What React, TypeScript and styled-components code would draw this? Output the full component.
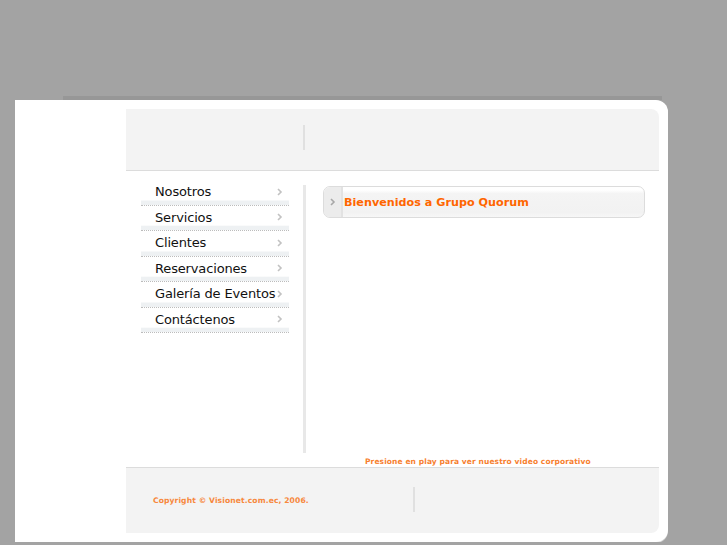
import React from "react";
import styled, { createGlobalStyle } from "styled-components";

const menu = [
  "Nosotros",
  "Servicios",
  "Clientes",
  "Reservaciones",
  "Galería de Eventos",
  "Contáctenos",
];

const GlobalStyle = createGlobalStyle`
  body {
    margin: 0;
    background: #a3a3a3;
    font-family: "DejaVu Sans", Verdana, sans-serif;
  }
`;

const Page = styled.div`
  padding: 100px 0 0 15px;
`;

const Panel = styled.div`
  position: relative;
  width: 653px;
  height: 442px;
  box-sizing: border-box;
  padding: 9px 9px 9px 111px;
  background: #fff;
  border-radius: 0 12px 12px 0;
  box-shadow: 0 1px 0 #d4d4d4;
  display: flex;
  flex-direction: column;

  &::before {
    content: "";
    position: absolute;
    top: -4px;
    left: 48px;
    right: 6px;
    height: 4px;
    background: #979797;
  }
`;

const Header = styled.div`
  height: 61px;
  background: #f3f3f3;
  border-bottom: 1px solid #dcdcdc;
  border-top-right-radius: 8px;
  display: flex;
  align-items: flex-start;
`;

const VDivider = styled.div<{ $left: number; $top: number }>`
  width: 2px;
  height: 25px;
  margin: ${(p) => p.$top}px 0 0 ${(p) => p.$left}px;
  background: #e0e0e0;
`;

const Body = styled.div`
  flex: 1;
  display: flex;
`;

const Menu = styled.ul`
  list-style: none;
  margin: 9px 0 0 15px;
  padding: 0;
  width: 148px;
`;

const MenuItem = styled.li`
  height: 25.5px;
  box-sizing: border-box;
  display: flex;
  align-items: center;
  justify-content: space-between;
  padding: 1px 6px 2px 14px;
  font-size: 13px;
  letter-spacing: -0.15px;
  white-space: nowrap;
  color: #111;
  border-bottom: 1px dotted #bcbcbc;
  background: linear-gradient(to bottom, #fff 0, #fff 80%, #eef1f3 84%, #eef1f3 100%);
`;

const Column = styled.div`
  width: 3px;
  margin: 14px 0 14px 14px;
  background: #e8e8e8;
`;

const Content = styled.div`
  flex: 1;
  display: flex;
  flex-direction: column;
  padding: 15px 14px 0 17px;
`;

const Welcome = styled.div`
  height: 32px;
  box-sizing: border-box;
  border: 1px solid #dcdcdc;
  border-radius: 7px;
  background: linear-gradient(to bottom, #fff 0, #fff 10%, #f4f4f4 22%, #f2f2f2 85%, #f7f7f7 100%);
  display: flex;
  align-items: stretch;
  overflow: hidden;
`;

const WelcomeIcon = styled.div`
  width: 17px;
  border-right: 2px solid #e2e2e2;
  background: #ececec;
  display: flex;
  align-items: center;
  justify-content: center;
`;

const Title = styled.h1`
  margin: 0;
  padding: 1px 0 0 1px;
  display: flex;
  align-items: center;
  font-size: 11.2px;
  font-weight: bold;
  color: #ff6600;
`;

const Caption = styled.div`
  margin-top: auto;
  padding: 0 0 1px 42px;
  font-size: 7.5px;
  font-weight: bold;
  color: #f77f2f;
  letter-spacing: 0.1px;
`;

const Footer = styled.div`
  height: 66px;
  box-sizing: border-box;
  background: #f3f3f3;
  border-top: 1px solid #dcdcdc;
  border-bottom-right-radius: 8px;
  display: flex;
  align-items: flex-start;
`;

const Copyright = styled.div`
  width: 260px;
  padding: 28px 0 0 27px;
  font-size: 7.6px;
  font-weight: bold;
  color: #f7883d;
  letter-spacing: 0.1px;
`;

const Chevron = ({ color }: { color: string }) => (
  <svg width="6" height="8" viewBox="0 0 6 8">
    <path d="M1 1 L4 4 L1 7" fill="none" stroke={color} strokeWidth="1.6" />
  </svg>
);

export default function App() {
  return (
    <>
      <GlobalStyle />
      <Page>
        <Panel>
          <Header>
            <VDivider $left={177} $top={16} />
          </Header>
          <Body>
            <Menu>
              {menu.map((m) => (
                <MenuItem key={m}>
                  <span>{m}</span>
                  <Chevron color="#c2c2c2" />
                </MenuItem>
              ))}
            </Menu>
            <Column />
            <Content>
              <Welcome>
                <WelcomeIcon>
                  <Chevron color="#a8a8a8" />
                </WelcomeIcon>
                <Title>Bienvenidos a Grupo Quorum</Title>
              </Welcome>
              <Caption>Presione en play para ver nuestro video corporativo</Caption>
            </Content>
          </Body>
          <Footer>
            <Copyright>Copyright © Visionet.com.ec, 2006.</Copyright>
            <VDivider $left={0} $top={19} />
          </Footer>
        </Panel>
      </Page>
    </>
  );
}
